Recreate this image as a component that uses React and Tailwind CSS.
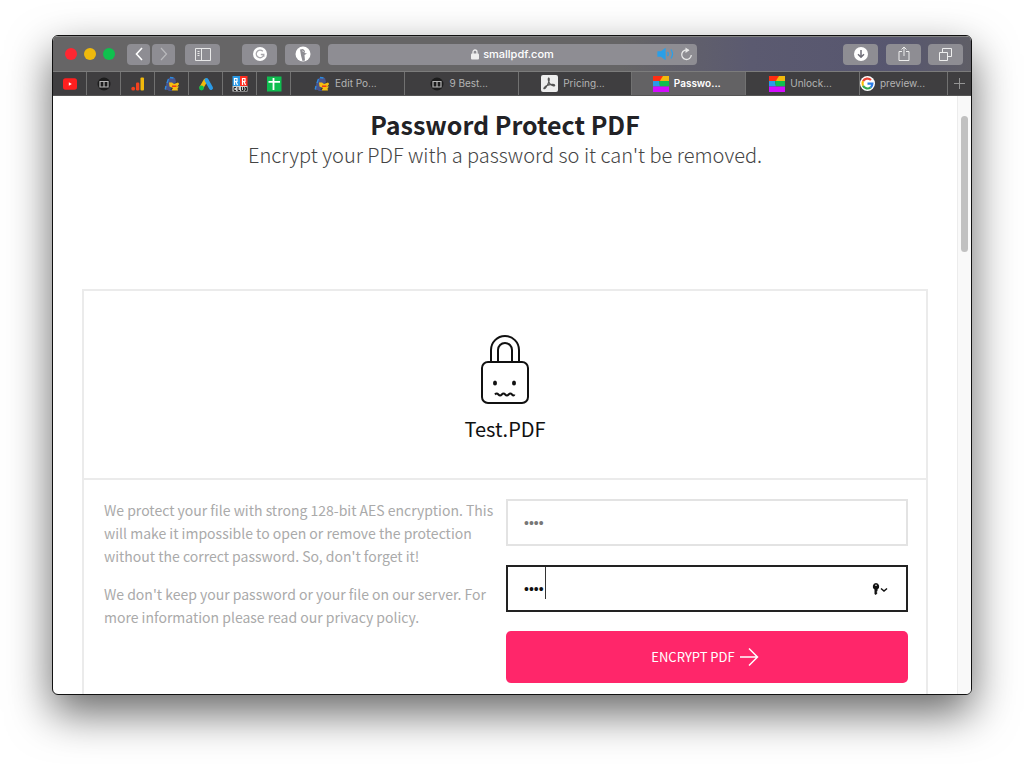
import React, { useState } from 'react';

const YoutubeIcon = () => (
  <svg width="16" height="16" viewBox="0 0 16 16">
    <path d="M3.500 2.200h9C14.300 2.200 15 3.300 15 5v6c0 1.700-.7 2.800-2.500 2.800h-9C1.700 13.800 1 12.700 1 11V5c0-1.700.7-2.800 2.500-2.800z" fill="#ff1f1f" />
    <path d="M6.800 6.200l3 1.800-3 1.800z" fill="#fff" />
  </svg>
);

const BookIcon = () => (
  <svg width="14" height="14" viewBox="0 0 14 14">
    <circle cx="7" cy="7" r="6.500" fill="#1c1c1c" />
    <path d="M3 4.500h8v5.500H3zM7 4.500V10" fill="none" stroke="#b5b5b5" strokeWidth="1.200" />
  </svg>
);

const AnalyticsIcon = () => (
  <svg width="16" height="16" viewBox="0 0 16 16">
    <rect x="10.500" y="1.500" width="3.500" height="13" rx="1" fill="#f2b90c" />
    <rect x="6" y="6.500" width="3.300" height="8" rx="1.200" fill="#f4411e" />
    <circle cx="3.200" cy="12.700" r="1.900" fill="#f4411e" />
  </svg>
);

const ExplorerIcon = () => (
  <svg width="16" height="16" viewBox="0 0 16 16">
    <path d="M4 3l2.500-2L11 2l1 4-3 3-3 5H1.500L2 8z" fill="#4a5488" />
    <path d="M4.500 3L3 7M2 10l-.8 3.500M6 1.500L9.500 2" stroke="#2a8be0" strokeWidth="1.400" />
    <path d="M5 6.500h3l2 1.500 4-1.500 1.200 1.500-2 2.500H15l-1.500 2 .5 2H7.500L9 12l-3.500-1.500z" fill="#f7c010" />
    <path d="M8 10.200h4.500" stroke="#f03a1a" strokeWidth="1.600" />
    <path d="M6 12l-1 2.500h3" stroke="#4a5488" strokeWidth="1.200" fill="none" />
  </svg>
);

const AdsIcon = () => (
  <svg width="16" height="16" viewBox="0 0 16 16">
    <path d="M7.500 4.500L3.500 11.500" stroke="#f2b90c" strokeWidth="4" strokeLinecap="round" />
    <path d="M8.500 4L13 12" stroke="#2a9be8" strokeWidth="4" strokeLinecap="round" />
    <circle cx="3.500" cy="12" r="2.400" fill="#0fc04e" />
  </svg>
);

const ClubIcon = () => (
  <svg width="16" height="16" viewBox="0 0 16 16">
    <path d="M.5 0H8v10H.5z" fill="#2a9be8" />
    <path d="M8 0h7.500v10H8z" fill="#ff2d20" />
    <path d="M2.500 9V2.500h2.500v3H2.500M4 5.500L5.500 9M10.500 9V2.500H13v3h-2.500M12 5.500L13.500 9" stroke="#fff" strokeWidth="1.200" fill="none" />
    <path d="M.5 10h15v5.500H.5z" fill="#cfcfcf" />
    <path d="M4 11.500H2v3h2M6 11v3.500h2M9.500 11v3.500h2V11M13 11.500h1.500v3H13z" stroke="#222" fill="none" />
  </svg>
);

const SheetsIcon = () => (
  <svg width="16" height="16" viewBox="0 0 16 16">
    <path d="M1 .500h14.500v15H1z" fill="#0fbd50" />
    <path d="M7.500 2v12M2.500 5.800h11.500" stroke="#fff" strokeWidth="1.800" />
  </svg>
);

const AcrobatIcon = () => (
  <svg width="17" height="17" viewBox="0 0 17 17">
    <rect width="17" height="17" rx="2" fill="#ededed" />
    <path d="M7.500 3c1.500 0 .5 4-.8 6.500-1 2-2.200 4-3.400 4.200-1.300 0 .5-2.600 3.700-3.600 3-.9 6.500-1 6.700.2.100 1.400-3.200.3-4.700-1.500C7.800 7.500 6.700 4 7.500 3z" fill="none" stroke="#555" strokeWidth="1.200" />
  </svg>
);

const SmallpdfIcon = () => (
  <svg width="16" height="16" viewBox="0 0 16 16">
    <path d="M0 0h10L8 5H0z" fill="#ff2d12" />
    <path d="M10 0h6v5H7l1-2z" fill="#f2b90c" />
    <path d="M0 5h6l1 5.500H0z" fill="#2a9be8" />
    <path d="M6 5h10v5.500H7z" fill="#0fc04e" />
    <path d="M0 10.500h16V16H0z" fill="#d40cff" />
  </svg>
);

const GoogleIcon = () => (
  <svg width="15" height="15" viewBox="0 0 15 15">
    <circle cx="7.500" cy="7.500" r="7.500" fill="#fff" />
    <g fill="none" strokeWidth="2.200">
      <path d="M11 4A5 5 0 0 0 3 5.300" stroke="#ea4335" />
      <path d="M3 5.300a5 5 0 0 0 0 4.400" stroke="#fbbc05" />
      <path d="M3 9.700a5 5 0 0 0 7.700 1.600" stroke="#34a853" />
      <path d="M10.700 11.300a5 5 0 0 0 1.700-3.600H7.500" stroke="#2a7de8" />
    </g>
  </svg>
);

const PadlockIcon = () => (
  <svg width="50" height="70" viewBox="0 0 50 70" fill="none" stroke="#111" strokeWidth="2">
    <path d="M11 27V15a14 14 0 0 1 28 0v12" />
    <path d="M18 27V15a7 7 0 0 1 14 0v12" />
    <rect x="2" y="27" width="46" height="41" rx="6" />
    <ellipse cx="15" cy="48" rx="2" ry="2.500" fill="#111" stroke="none" />
    <ellipse cx="34" cy="48" rx="2" ry="2.500" fill="#111" stroke="none" />
    <path d="M15 59.500q1.700-2 3.400 0t3.400 0 3.400 0 3.400 0 3.400 0 2.500 0" />
  </svg>
);

const pinnedTabs = [
  { name: 'YouTube', icon: <YoutubeIcon /> },
  { name: 'Library', icon: <BookIcon /> },
  { name: 'Analytics', icon: <AnalyticsIcon /> },
  { name: 'Explorer', icon: <ExplorerIcon /> },
  { name: 'Ads', icon: <AdsIcon /> },
  { name: 'Club', icon: <ClubIcon /> },
  { name: 'Sheets', icon: <SheetsIcon /> },
];

const tabs = [
  { id: 1, title: 'Edit Po...', icon: <ExplorerIcon /> },
  { id: 2, title: '9 Best...', icon: <BookIcon /> },
  { id: 3, title: 'Pricing...', icon: <AcrobatIcon /> },
  { id: 4, title: 'Passwo...', icon: <SmallpdfIcon /> },
  { id: 5, title: 'Unlock...', icon: <SmallpdfIcon /> },
];

const ToolButton = ({ label, className, children }) => (
  <button
    aria-label={label}
    className={`h-[21px] rounded bg-[#8e8d93] text-white flex items-center justify-center shrink-0 ${className}`}
  >
    {children}
  </button>
);

const Toolbar = () => (
  <div className="h-[35px] flex items-center pl-3 pr-2 border-t border-[#858585] bg-[linear-gradient(90deg,#666566_0%,#666566_62%,#5b5a70_76%,#57566f_92%,#5f5e66_100%)]">
    <div className="flex gap-[7px] mr-3">
      <span className="size-3 rounded-full bg-[#ff2732]" />
      <span className="size-3 rounded-full bg-[#efb90c]" />
      <span className="size-3 rounded-full bg-[#0fc04e]" />
    </div>
    <ToolButton label="Back" className="w-[23px]">
      <svg width="8" height="14" viewBox="0 0 8 14"><path d="M7 1L1.500 7 7 13" fill="none" stroke="#fff" strokeWidth="1.600" /></svg>
    </ToolButton>
    <ToolButton label="Forward" className="w-[23px] ml-0.5">
      <svg width="8" height="14" viewBox="0 0 8 14"><path d="M1 1l5.500 6L1 13" fill="none" stroke="#b9b9bc" strokeWidth="1.200" /></svg>
    </ToolButton>
    <ToolButton label="Show sidebar" className="w-[35px] ml-2.5">
      <svg width="16" height="13" viewBox="0 0 16 13" fill="none" stroke="#e8e8e8"><path d="M.5.500h15v12H.5zM6.500.500v12M2.500 3.500h2M2.500 5.500h2M2.500 7.500h2" /></svg>
    </ToolButton>
    <ToolButton label="Grammar check" className="w-[35px] ml-[22px]">
      <svg width="14" height="14" viewBox="0 0 14 14">
        <circle cx="7" cy="7" r="7" fill="#fff" />
        <path d="M9.800 4.300A3.800 3.800 0 1 0 10.800 7.500H7.800M10.800 7.200v2.600" fill="none" stroke="#a9a8ad" strokeWidth="1.300" />
      </svg>
    </ToolButton>
    <ToolButton label="Privacy" className="w-[35px] ml-2">
      <svg width="16" height="16" viewBox="0 0 16 16">
        <circle cx="8" cy="8" r="7.500" fill="#fff" />
        <path d="M5 3.500l3-.5 2 2-.5 2 2.500.5-2.500 1.500.5 5.500-2.500.5L6 9.500z" fill="#8e8d93" />
        <path d="M7.500 5l1 .5" stroke="#fff" />
      </svg>
    </ToolButton>
    <div className="h-[21px] flex-1 flex items-center rounded bg-[#8e8d93] ml-2 pr-1">
      <div className="flex-1 flex items-center justify-center gap-1 pl-10 text-[11px] font-medium text-white">
        <svg width="8" height="11" viewBox="0 0 8 11"><path d="M2 5V3a2 2 0 0 1 4 0v2" fill="none" stroke="#eee" strokeWidth="1.300" /><rect y="4.500" width="8" height="6" rx="1" fill="#eee" /></svg>
        smallpdf.com
      </div>
      <button aria-label="Mute this tab">
        <svg width="17" height="12" viewBox="0 0 17 12" fill="none" stroke="#2a9fe8" strokeWidth="1.300">
          <path d="M1 4h3l4-3v10L4 8H1z" fill="#2a9fe8" />
          <path d="M10.500 4q1.500 2 0 4M14 1.500q3 4.500 0 9" />
        </svg>
      </button>
      <button aria-label="Reload" className="ml-1.5">
        <svg width="13" height="14" viewBox="0 0 13 14"><path d="M8.500 3.300A4.800 4.800 0 1 0 11.300 8" fill="none" stroke="#e8e8e8" strokeWidth="1.300" /><path d="M5.500.500l4 2.800-4 2.700z" fill="#e8e8e8" /></svg>
      </button>
    </div>
    <ToolButton label="Downloads" className="w-[35px] ml-[146px]">
      <svg width="14" height="14" viewBox="0 0 14 14"><circle cx="7" cy="7" r="7" fill="#fff" /><path d="M7 3v7M4 7.300l3 3 3-3" fill="none" stroke="#6f6e78" strokeWidth="1.500" /></svg>
    </ToolButton>
    <ToolButton label="Share" className="w-[35px] ml-2">
      <svg width="12" height="16" viewBox="0 0 12 16" fill="none" stroke="#eee"><path d="M4 5.500H1v9h10v-9H8M6 10V1M3.500 3.500L6 1l2.500 2.500" /></svg>
    </ToolButton>
    <ToolButton label="Show all tabs" className="w-[35px] ml-[7px]">
      <svg width="13" height="13" viewBox="0 0 13 13" fill="none" stroke="#eee"><path d="M.5 4.500h8v8h-8zM3.500 4.500v-4h9v8h-4" /></svg>
    </ToolButton>
  </div>
);

const TabBar = ({ current, onSelect }) => (
  <div className="h-[25px] flex border-t border-[#7c7c7c] border-b border-b-[#555] bg-[#3f3e40] text-[10px] text-[#b4b4b4]">
    {pinnedTabs.map((tab) => (
      <button
        key={tab.name}
        aria-label={tab.name}
        className="w-[34px] shrink-0 flex items-center justify-center border-r border-[#717171]"
      >
        {tab.icon}
      </button>
    ))}
    {tabs.map((tab) => (
      <button
        key={tab.id}
        onClick={() => onSelect(tab.id)}
        className={`flex-1 min-w-0 flex items-center justify-center gap-[5px] pr-1 border-r border-[#717171]
          ${tab.id === current ? 'bg-[#636264] text-white font-semibold' : ''}`
        }
      >
        {tab.icon}
        {tab.title}
      </button>
    ))}
    <button className="w-[88px] shrink-0 flex items-center gap-[5px] border-r border-[#717171]">
      <GoogleIcon />
      preview...
    </button>
    <button aria-label="New tab" className="w-[23px] shrink-0 flex items-center justify-center">
      <svg width="11" height="11" viewBox="0 0 11 11"><path d="M5.500 0v11M0 5.500h11" stroke="#949494" /></svg>
    </button>
  </div>
);

const ProtectForm = () => {
  const [password, setPassword] = useState('test');
  const [repeated, setRepeated] = useState('test');

  return (
    <form className="flex flex-col" onSubmit={(e) => e.preventDefault()}>
      <input
        type="password"
        aria-label="Choose your password"
        value={password}
        onChange={(e) => setPassword(e.target.value)}
        className="h-[47px] w-full border-2 border-[#e3e3e3] px-4 text-[14px] font-['Liberation_Sans',sans-serif] text-[#777] outline-none"
      />
      <div className="relative mt-[19px]">
        <input
          type="password"
          aria-label="Repeat your password"
          value={repeated}
          onChange={(e) => setRepeated(e.target.value)}
          className="block h-[47px] w-full border-2 border-[#222] px-4 text-[14px] font-['Liberation_Sans',sans-serif] text-[#111] outline-none"
        />
        <span className="absolute left-[39px] top-0.5 w-px h-8 bg-[#333]" />
        <button type="button" aria-label="Saved passwords" className="absolute right-5 top-[18px]">
          <svg width="16" height="13" viewBox="0 0 16 13">
            <path d="M4 0a3.500 3.500 0 0 1 1.500 6.500V8l-1 1 1 1-1.700 2L2.500 11V6.500A3.500 3.500 0 0 1 4 0z" fill="#111" />
            <circle cx="4" cy="2.200" r=".8" fill="#fff" />
            <path d="M9 5.500l3 2.500 3-2.500" fill="none" stroke="#111" strokeWidth="1.500" />
          </svg>
        </button>
      </div>
      <button className="mt-[19px] h-[52px] rounded-[5px] bg-[#ff266a] pr-1 text-white text-[13px] flex items-center justify-center gap-1">
        ENCRYPT PDF
        <svg width="20" height="20" viewBox="0 0 20 20" fill="none" stroke="#fff" strokeWidth="1.500"><path d="M1 10h17.500M10 1.500l8.500 8.500-8.500 8.500" /></svg>
      </button>
    </form>
  );
};

const App = () => {
  const [currentTab, setCurrentTab] = useState(4);

  return (
    <div className="h-screen flex bg-white px-[52px] pt-[35px] pb-[69px] font-['Inter',sans-serif]">
      <div className="flex-1 min-w-0 flex flex-col overflow-hidden rounded-md border border-[#111] bg-white shadow-[0_18px_44px_rgba(0,0,0,0.6)]">
        <Toolbar />
        <TabBar current={currentTab} onSelect={setCurrentTab} />
        <div className="flex-1 min-h-0 flex font-['Noto_Sans_CJK_SC',sans-serif]">
          <main className="flex-1 min-w-0 overflow-hidden px-[29px] pt-3">
            <h1 className="text-center text-[25px] leading-8 font-bold text-[#222226]">Password Protect PDF</h1>
            <p className="text-center text-[20px] leading-[30px] font-light text-[#444]">
              Encrypt your PDF with a password so it can't be removed.
            </p>
            <section className="mt-[119px] border-2 border-[#ebebeb] pb-10">
              <div className="flex flex-col items-center pt-11 pb-[33px] border-b-2 border-[#ebebeb] text-[#111]">
                <PadlockIcon />
                <h2 className="mt-2 text-[20px] leading-8">Test.PDF</h2>
              </div>
              <div className="grid grid-cols-2 pl-5 pr-[18px] pt-[19px]">
                <div className="pr-1 text-[14px] leading-[23px] text-[#aaa]">
                  <p>
                    We protect your file with strong 128-bit AES encryption. This will make it
                    impossible to open or remove the protection without the correct password. So,
                    don't forget it!
                  </p>
                  <p className="mt-[15px]">
                    We don't keep your password or your file on our server. For more information
                    please read our privacy policy.
                  </p>
                </div>
                <ProtectForm />
              </div>
            </section>
          </main>
          <div className="w-3.5 border-l border-[#ececec] bg-[#f9f9f9] pt-5 flex justify-center items-start">
            <span className="w-[7px] h-[136px] rounded-full bg-[#c1c1c1]" />
          </div>
        </div>
      </div>
    </div>
  );
};

export default App;
